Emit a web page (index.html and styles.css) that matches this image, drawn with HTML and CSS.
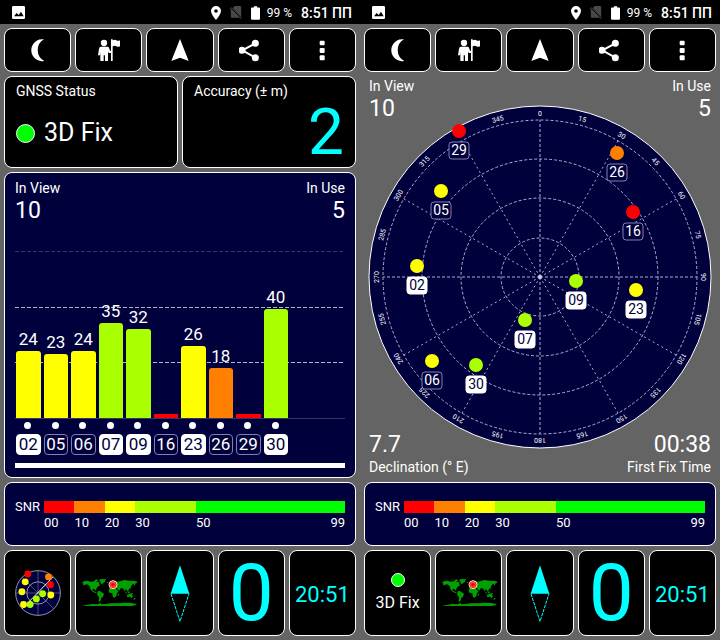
FILE: index.html
```html
<!DOCTYPE html>
<html lang="en">
<head>
<meta charset="utf-8">
<title>GNSS Status</title>
<link rel="stylesheet" href="styles.css">
</head>
<body>
<svg class="defs" aria-hidden="true">
  <symbol id="i-image" viewBox="0 0 39 39"><path fill="#fff" d="M4 0h31q4 0 4 4v31q0 4-4 4H4q-4 0-4-4V4q0-4 4-4z"/><path d="M6 31l8-10 6 6 7-10 8 14z"/></symbol>
  <symbol id="i-pin" viewBox="0 0 30 42"><path fill="#fff" fill-rule="evenodd" d="M15 0a15 15 0 0 1 15 15c0 10-15 27-15 27S0 25 0 15A15 15 0 0 1 15 0zm0 9.500a5.500 5.500 0 1 0 0 11 5.500 5.500 0 0 0 0-11z"/></symbol>
  <symbol id="i-sim" viewBox="0 0 36 40"><path fill="#484848" d="M14 0h16q4 0 4 4v30L8 6zM0 7l4-3 32 33-3 3-5-4H5q-3 0-3-3V12z"/><path stroke="#0c0c0c" stroke-width="3" d="M0 3l34 35"/></symbol>
  <symbol id="i-battery" viewBox="0 0 28 42"><path fill="#fff" d="M9 0h10v4h6q3 0 3 3v32q0 3-3 3H3q-3 0-3-3V7q0-3 3-3h6z"/></symbol>
  <symbol id="i-moon" viewBox="77 114 72 72"><path fill="#fff" d="M131 118A33 33 0 1 0 132 183A37 37 0 0 1 131 118z"/></symbol>
  <symbol id="i-guide" viewBox="291 114 72 72"><g fill="#fff"><circle cx="312" cy="129" r="9.500"/><path d="M302 140h21q3 0 4 3l3 9 6 1v6h-10l-2-5v29h-9v-17h-4v17h-10v-27l-1 10h-6l3-19q1-7 5-7z"/><path d="M333 118h5v3q6-3 11 0t11 0v18q-6 3-11 0t-11 0v44h-5z"/></g></symbol>
  <symbol id="i-nav" viewBox="505 114 72 72"><path fill="#fff" d="M541 117l26 66-26-10-26 10z"/></symbol>
  <symbol id="i-share" viewBox="719 114 72 72"><path d="M768 130L729 151l39 22" fill="none" stroke="#fff" stroke-width="6"/><g fill="#fff"><circle cx="768" cy="130" r="10.500"/><circle cx="728" cy="151" r="10.500"/><circle cx="768" cy="173" r="10.500"/></g></symbol>
  <symbol id="i-more" viewBox="931 114 72 72"><g fill="#fff"><rect x="960" y="122" width="15" height="14" rx="3"/><rect x="960" y="144" width="15" height="15" rx="3"/><rect x="960" y="166" width="15" height="15" rx="3"/></g></symbol>
  <symbol id="i-world" viewBox="243 104 168 84">
    <path fill="#00a000" d="M251 111l11-2 11 3 12-2 13 4-1 5 4 3-8 5-4 6-1 6-5-5-6 1 2 5 7 3 5 3-3 1-10-5-7-8-2-8-7-6-9 2-6 2 4-5-5-3zM283 107l8-2 3 4-8 2zM297 107l8-3 13 1-4 8-9 7-4-6zM293 141l7-1 7 5 5 4-3 8-5 4-3 9-2 3-3-2 1-12-6-9zM320 114l4-1 2 3-5 1zM328 129l-1-6 6-5 2-7 7-3 4 3 9 1 10-3 9-2 13 2 18 1 15 3-5 4-8-1-3 8-3-6-6 4-3 10-5 2-2 6-3 1-4-7-4 7-4-8-7-3-5 9-6-5-4-6-7-1-7 3zM328 132l9-2 11 2 3 6 5 2-5 7-2 8-6 5-4-2-2-11-9-2-2-7zM354 149l3-3-1 8-3 1zM374 141l5 3 3 5-4-2zM383 142l5-1 1 4-5 2zM390 145l8 2 2 3-7-2zM381 152l7-4 7 1 4 7-4 5-5-4-9 1zM403 160l3 2-4 5-2-2zM387 123l3-3 1 5-3 3zM245 184l15-2 17-3 16 1 8-4 3 4 14-1 14-2 23 0 17-2 22 1 14 3 2 3-16 3H260z"/>
    <circle cx="339" cy="121" r="12" fill="#f00" stroke="#fff" stroke-width="2.500"/><circle cx="339" cy="121" r="7" fill="#f00" stroke="#ffb0a0" stroke-width="1.500"/>
  </symbol>
  <symbol id="i-compass" viewBox="0 0 60 170"><path fill="#0ff" d="M30 0l28 86H2z"/><path fill="none" stroke="#0ff" stroke-width="3" stroke-dasharray="10 3" d="M3 86l27 83 27-83"/></symbol>
  <symbol id="i-radar" viewBox="43 275 140 140">
    <g fill="#00003c" stroke="#dde" stroke-width="2"><circle cx="113" cy="345" r="68"/><circle cx="113" cy="345" r="34"/></g>
    <path stroke="#9999b8" stroke-width="1.500" d="M45 345h136M113 277v136M65 297l96 96"/><path stroke="#fff" stroke-width="3" d="M65 393l93-96"/>
    <g fill="#f00"><circle cx="82" cy="287" r="10.500"/><circle cx="151" cy="320" r="10.500"/></g><circle cx="145" cy="296" r="10.500" fill="#ff8000"/>
    <g fill="#ff0"><circle cx="74" cy="311" r="10.500"/><circle cx="64" cy="341" r="10.500"/><circle cx="152" cy="351" r="10.500"/><circle cx="69" cy="380" r="10.500"/></g>
    <g fill="#af0"><circle cx="127" cy="347" r="10.500"/><circle cx="108" cy="363" r="10.500"/><circle cx="89" cy="380" r="10.500"/></g>
  </symbol>
</svg>
<div class="screens">
  <section class="screen">
    <header class="status">
      <svg class="s-image"><use href="#i-image"/></svg>
      <div class="status-right">
        <svg class="s-pin"><use href="#i-pin"/></svg>
        <svg class="s-sim"><use href="#i-sim"/></svg>
        <span class="battery"><svg class="s-battery"><use href="#i-battery"/></svg>99 %</span>
        <time class="clock">8:51 ПП</time>
      </div>
    </header>
    <main class="content">
      <nav class="tiles tools">
        <button class="tile" aria-label="Night mode"><svg class="icon"><use href="#i-moon"/></svg></button>
        <button class="tile" aria-label="Guide"><svg class="icon"><use href="#i-guide"/></svg></button>
        <button class="tile" aria-label="Navigate"><svg class="icon"><use href="#i-nav"/></svg></button>
        <button class="tile" aria-label="Share"><svg class="icon"><use href="#i-share"/></svg></button>
        <button class="tile" aria-label="More"><svg class="icon"><use href="#i-more"/></svg></button>
      </nav>
      <div class="cards">
        <div class="card"><h2 class="label">GNSS Status</h2><p class="fix"><i class="led"></i>3D Fix</p></div>
        <div class="card"><h2 class="label">Accuracy (± m)</h2><p class="accuracy">2</p></div>
      </div>
      <div class="panel chart">
        <div class="counts">
          <div><div class="label">In View</div><div class="value">10</div></div>
          <div class="end"><div class="label">In Use</div><div class="value">5</div></div>
        </div>
        <div class="plot">
          <div class="lines"><i class="line faint"></i><i class="line"></i><i class="line"></i></div>
          <div class="bars">
            <div class="bar yellow" style="--v:24"><span>24</span></div>
            <div class="bar yellow" style="--v:23"><span>23</span></div>
            <div class="bar yellow" style="--v:24"><span>24</span></div>
            <div class="bar lime" style="--v:34"><span>35</span></div>
            <div class="bar lime" style="--v:32"><span>32</span></div>
            <div class="bar none"></div>
            <div class="bar yellow" style="--v:26"><span>26</span></div>
            <div class="bar orange" style="--v:18"><span>18</span></div>
            <div class="bar none"></div>
            <div class="bar lime" style="--v:39"><span>40</span></div>
          </div>
        </div>
        <div class="sats">
          <div class="sat used">02</div><div class="sat">05</div><div class="sat">06</div><div class="sat used">07</div><div class="sat used">09</div><div class="sat">16</div><div class="sat used">23</div><div class="sat">26</div><div class="sat">29</div><div class="sat used">30</div>
        </div>
        <div class="scroll"></div>
      </div>
      <div class="panel snr">
        <span class="label small">SNR</span>
        <div class="scale"><i class="red"></i><i class="orange"></i><i class="yellow"></i><i class="lime"></i><i class="green"></i></div>
        <div class="scale ticks"><span>00</span><span>10</span><span>20</span><span>30</span><span class="last"><span>50</span><span>99</span></span></div>
      </div>
      <nav class="tiles pages">
        <button class="tile" aria-label="Sky view"><svg class="p-radar"><use href="#i-radar"/></svg></button>
        <button class="tile" aria-label="Position"><svg class="p-world"><use href="#i-world"/></svg></button>
        <button class="tile" aria-label="Compass"><svg class="p-compass"><use href="#i-compass"/></svg></button>
        <button class="tile speed">0</button>
        <button class="tile time">20:51</button>
      </nav>
    </main>
  </section>

  <section class="screen">
    <header class="status">
      <svg class="s-image"><use href="#i-image"/></svg>
      <div class="status-right">
        <svg class="s-pin"><use href="#i-pin"/></svg>
        <svg class="s-sim"><use href="#i-sim"/></svg>
        <span class="battery"><svg class="s-battery"><use href="#i-battery"/></svg>99 %</span>
        <time class="clock">8:51 ПП</time>
      </div>
    </header>
    <main class="content">
      <nav class="tiles tools">
        <button class="tile" aria-label="Night mode"><svg class="icon"><use href="#i-moon"/></svg></button>
        <button class="tile" aria-label="Guide"><svg class="icon"><use href="#i-guide"/></svg></button>
        <button class="tile" aria-label="Navigate"><svg class="icon"><use href="#i-nav"/></svg></button>
        <button class="tile" aria-label="Share"><svg class="icon"><use href="#i-share"/></svg></button>
        <button class="tile" aria-label="More"><svg class="icon"><use href="#i-more"/></svg></button>
      </nav>
      <div class="sky">
        <svg class="sky-plot" viewBox="-172 -172 344 344">
          <circle class="disc" r="171"/>
          <g class="rings"><circle r="39"/><circle r="79"/><circle r="118"/><circle r="157"/>
            <path d="M0 0V-157M0 0V157M0 0H157M0 0H-157"/>
            <path class="spokes" d="M0 0L78-136M0 0L136-78M0 0L136 78M0 0L78 136M0 0L-78 136M0 0L-136 78M0 0L-136-78M0 0L-78-136"/></g>
          <circle r="2" fill="#ccd"/>
          <g class="azimuths">
            <text y="-161">0</text><text y="-161" transform="rotate(15)">15</text><text y="-161" transform="rotate(30)">30</text><text y="-161" transform="rotate(45)">45</text><text y="-161" transform="rotate(60)">60</text><text y="-161" transform="rotate(75)">75</text>
            <text y="-161" transform="rotate(90)">90</text><text y="-161" transform="rotate(105)">105</text><text y="-161" transform="rotate(120)">120</text><text y="-161" transform="rotate(135)">135</text><text y="-161" transform="rotate(150)">150</text><text y="-161" transform="rotate(165)">165</text>
            <text y="-161" transform="rotate(180)">180</text><text y="-161" transform="rotate(195)">195</text><text y="-161" transform="rotate(210)">210</text><text y="-161" transform="rotate(225)">225</text><text y="-161" transform="rotate(240)">240</text><text y="-161" transform="rotate(255)">255</text>
            <text y="-161" transform="rotate(270)">270</text><text y="-161" transform="rotate(285)">285</text><text y="-161" transform="rotate(300)">300</text><text y="-161" transform="rotate(315)">315</text><text y="-161" transform="rotate(345)">345</text>
          </g>
          <g class="marker" transform="translate(-81 -146)"><circle r="7" fill="#f00"/><rect x="-10" y="11" width="20" height="17" rx="3"/><text y="24">29</text></g>
          <g class="marker" transform="translate(77 -124)"><circle r="7" fill="#ff8000"/><rect x="-10" y="11" width="20" height="17" rx="3"/><text y="24">26</text></g>
          <g class="marker" transform="translate(-99 -86)"><circle r="7" fill="#ff0"/><rect x="-10" y="11" width="20" height="17" rx="3"/><text y="24">05</text></g>
          <g class="marker" transform="translate(93 -65)"><circle r="7" fill="#f00"/><rect x="-10" y="11" width="20" height="17" rx="3"/><text y="24">16</text></g>
          <g class="marker used" transform="translate(-123 -11)"><circle r="7" fill="#ff0"/><rect x="-10" y="11" width="20" height="17" rx="3"/><text y="24">02</text></g>
          <g class="marker used" transform="translate(36 4)"><circle r="7" fill="#af0"/><rect x="-10" y="11" width="20" height="17" rx="3"/><text y="24">09</text></g>
          <g class="marker used" transform="translate(96 13)"><circle r="7" fill="#ff0"/><rect x="-10" y="11" width="20" height="17" rx="3"/><text y="24">23</text></g>
          <g class="marker used" transform="translate(-15 43)"><circle r="7" fill="#af0"/><rect x="-10" y="11" width="20" height="17" rx="3"/><text y="24">07</text></g>
          <g class="marker" transform="translate(-108 84)"><circle r="7" fill="#ff0"/><rect x="-10" y="11" width="20" height="17" rx="3"/><text y="24">06</text></g>
          <g class="marker used" transform="translate(-64 88)"><circle r="7" fill="#af0"/><rect x="-10" y="11" width="20" height="17" rx="3"/><text y="24">30</text></g>
        </svg>
        <div class="corner"><div class="label">In View</div><div class="value">10</div></div>
        <div class="corner end"><div class="label">In Use</div><div class="value">5</div></div>
        <div class="corner bottom"><div class="value">7.7</div><div class="label">Declination (° E)</div></div>
        <div class="corner bottom end"><div class="value">00:38</div><div class="label">First Fix Time</div></div>
      </div>
      <div class="panel snr">
        <span class="label small">SNR</span>
        <div class="scale"><i class="red"></i><i class="orange"></i><i class="yellow"></i><i class="lime"></i><i class="green"></i></div>
        <div class="scale ticks"><span>00</span><span>10</span><span>20</span><span>30</span><span class="last"><span>50</span><span>99</span></span></div>
      </div>
      <nav class="tiles pages">
        <button class="tile status-tile"><i class="led led-small"></i>3D Fix</button>
        <button class="tile" aria-label="Position"><svg class="p-world"><use href="#i-world"/></svg></button>
        <button class="tile" aria-label="Compass"><svg class="p-compass"><use href="#i-compass"/></svg></button>
        <button class="tile speed">0</button>
        <button class="tile time">20:51</button>
      </nav>
    </main>
  </section>
</div>
</body>
</html>
```
FILE: styles.css
```css
* { box-sizing: border-box; }
body { margin: 0; background: #646464; color: #fff; font-family: Roboto, "Liberation Sans", sans-serif; }
h2, p { margin: 0; font-weight: 400; }
i { display: block; }
svg { display: block; flex: none; }
.defs { position: absolute; width: 0; height: 0; }

.screens { display: grid; grid-template-columns: 1fr 1fr; min-height: 100vh; }
.screen { display: flex; flex-direction: column; min-width: 0; }

/* Phone status bar */
.status { display: flex; align-items: center; justify-content: space-between; height: 24px; padding: 1px 8px 0 12px; background: #000; }
.status-right { display: flex; align-items: center; gap: 9px; }
.battery { display: flex; align-items: center; gap: 7px; font-size: 12px; }
.clock { font-size: 14px; font-weight: 500; }
.s-image { width: 13px; height: 13px; }
.s-pin { width: 10px; height: 14px; }
.s-sim { width: 12px; height: 13px; }
.s-battery { width: 9px; height: 14px; }

.content { flex: 1; display: flex; flex-direction: column; gap: 4px; padding: 4px; }

/* Rows of tiles */
.tiles { display: grid; grid-template-columns: repeat(5, 1fr); gap: 4px; }
.tile { display: flex; align-items: center; justify-content: center; min-width: 0; padding: 0; border: 1px solid #fff; border-radius: 8px; background: #000; color: #fff; font-family: inherit; }
.tools .tile { height: 44px; }
.pages .tile { height: 86px; }
.icon { width: 24px; height: 24px; }
.p-radar { width: 46px; height: 46px; }
.p-world { width: 56px; height: 28px; }
.p-compass { width: 20px; height: 57px; }
.pages .speed { color: #0ff; font-size: 80px; }
.pages .time { color: #0ff; font-size: 22px; padding-top: 3px; }
.status-tile { flex-direction: column; gap: 6px; font-size: 16px; line-height: 20px; }

/* Status and accuracy cards */
.cards { display: grid; grid-template-columns: 1fr 1fr; gap: 4px; }
.card { display: flex; flex-direction: column; height: 92px; padding: 6px 11px; border: 1px solid #fff; border-radius: 8px; background: #000; }
.label { font-size: 14px; line-height: 17px; }
.value { font-size: 23px; line-height: 28px; }
.end { text-align: right; }
.fix { display: flex; align-items: center; gap: 9px; margin-top: 17px; font-size: 25px; line-height: 32px; }
.led { width: 19px; height: 19px; border: 1px solid #fff; border-radius: 50%; background: #0f0; }
.led-small { width: 14px; height: 14px; }
.accuracy { color: #0ff; font-size: 64px; line-height: 66px; text-align: right; }

.panel { border: 1px solid #fff; border-radius: 8px; background: #00003c; padding: 7px 10px; }
.red { background: #f00; }
.orange { background: #ff8000; }
.yellow { background: #ff0; }
.lime { background: #af0; }
.green { background: #0f0; }

/* Signal chart */
.chart { flex: 1; display: flex; flex-direction: column; padding-bottom: 9px; }
.counts { display: flex; justify-content: space-between; margin-bottom: 26px; }
.plot { flex: 1; display: grid; min-height: 167px; border-bottom: 1px solid #34345f; }
.lines, .bars { grid-area: 1 / 1; display: grid; }
.line { height: 1px; background: repeating-linear-gradient(90deg, #b4b4c8 0 4px, #00003c 4px 6px); }
.line.faint { opacity: .3; }
.bars, .sats { grid-template-columns: repeat(12, 1fr); column-gap: 3px; padding: 0 2px 0 1px; }
.bars { align-items: end; }
.bar { height: calc(var(--v) * 100% / 60); border-radius: 3px 3px 0 0; font-size: 17px; line-height: 20px; text-align: center; }
.bar span { display: block; margin-top: -22px; }
.bar.none { height: 4px; border-radius: 0; background: #f00; }
.sats { display: grid; margin-top: 3px; font-size: 17px; line-height: 19px; text-align: center; }
.sat { border: 1px solid #8080b0; border-radius: 4px; margin-top: 12px; position: relative; }
.sat.used { background: #fff; border-color: #fff; color: #00003c; }
.sat::before { content: ""; position: absolute; top: -13px; left: calc(50% - 4px); width: 7px; height: 7px; border-radius: 50%; background: #fff; }
.scroll { height: 5px; margin-top: 8px; background: #fff; }

/* Signal scale */
.snr { display: grid; grid-template-columns: auto 1fr; grid-template-rows: 12px auto; column-gap: 4px; align-items: center; height: 64px; padding-top: 18px; align-content: start; }
.small { font-size: 13px; line-height: 12px; }
.scale { display: grid; grid-template-columns: 10fr 10fr 10fr 20fr 49fr; grid-column: 2; align-self: stretch; }
.ticks { font-size: 13px; line-height: 20px; }
.last { display: flex; justify-content: space-between; }

/* Sky view */
.sky { flex: 1; display: grid; padding: 2px 1px; }
.sky-plot { grid-area: 1 / 1; place-self: center; width: calc(100% - 6px); }
.corner { grid-area: 1 / 1; place-self: start; padding: 0 4px; }
.corner.bottom { align-self: end; }
.corner.end { justify-self: end; }
.disc { fill: #00003c; stroke: #fff; stroke-width: 1; }
.rings { fill: none; stroke: #b0b0cc; stroke-width: 1; stroke-dasharray: 3 2; }
.spokes { stroke-dasharray: 2 3; }
.azimuths { fill: #fff; font-size: 7px; text-anchor: middle; }
.marker { font-size: 14px; text-anchor: middle; }
.marker rect { fill: #00003c; stroke: #8080b0; }
.marker text { fill: #fff; }
.marker.used rect { fill: #fff; stroke: #fff; }
.marker.used text { fill: #00003c; }
```
